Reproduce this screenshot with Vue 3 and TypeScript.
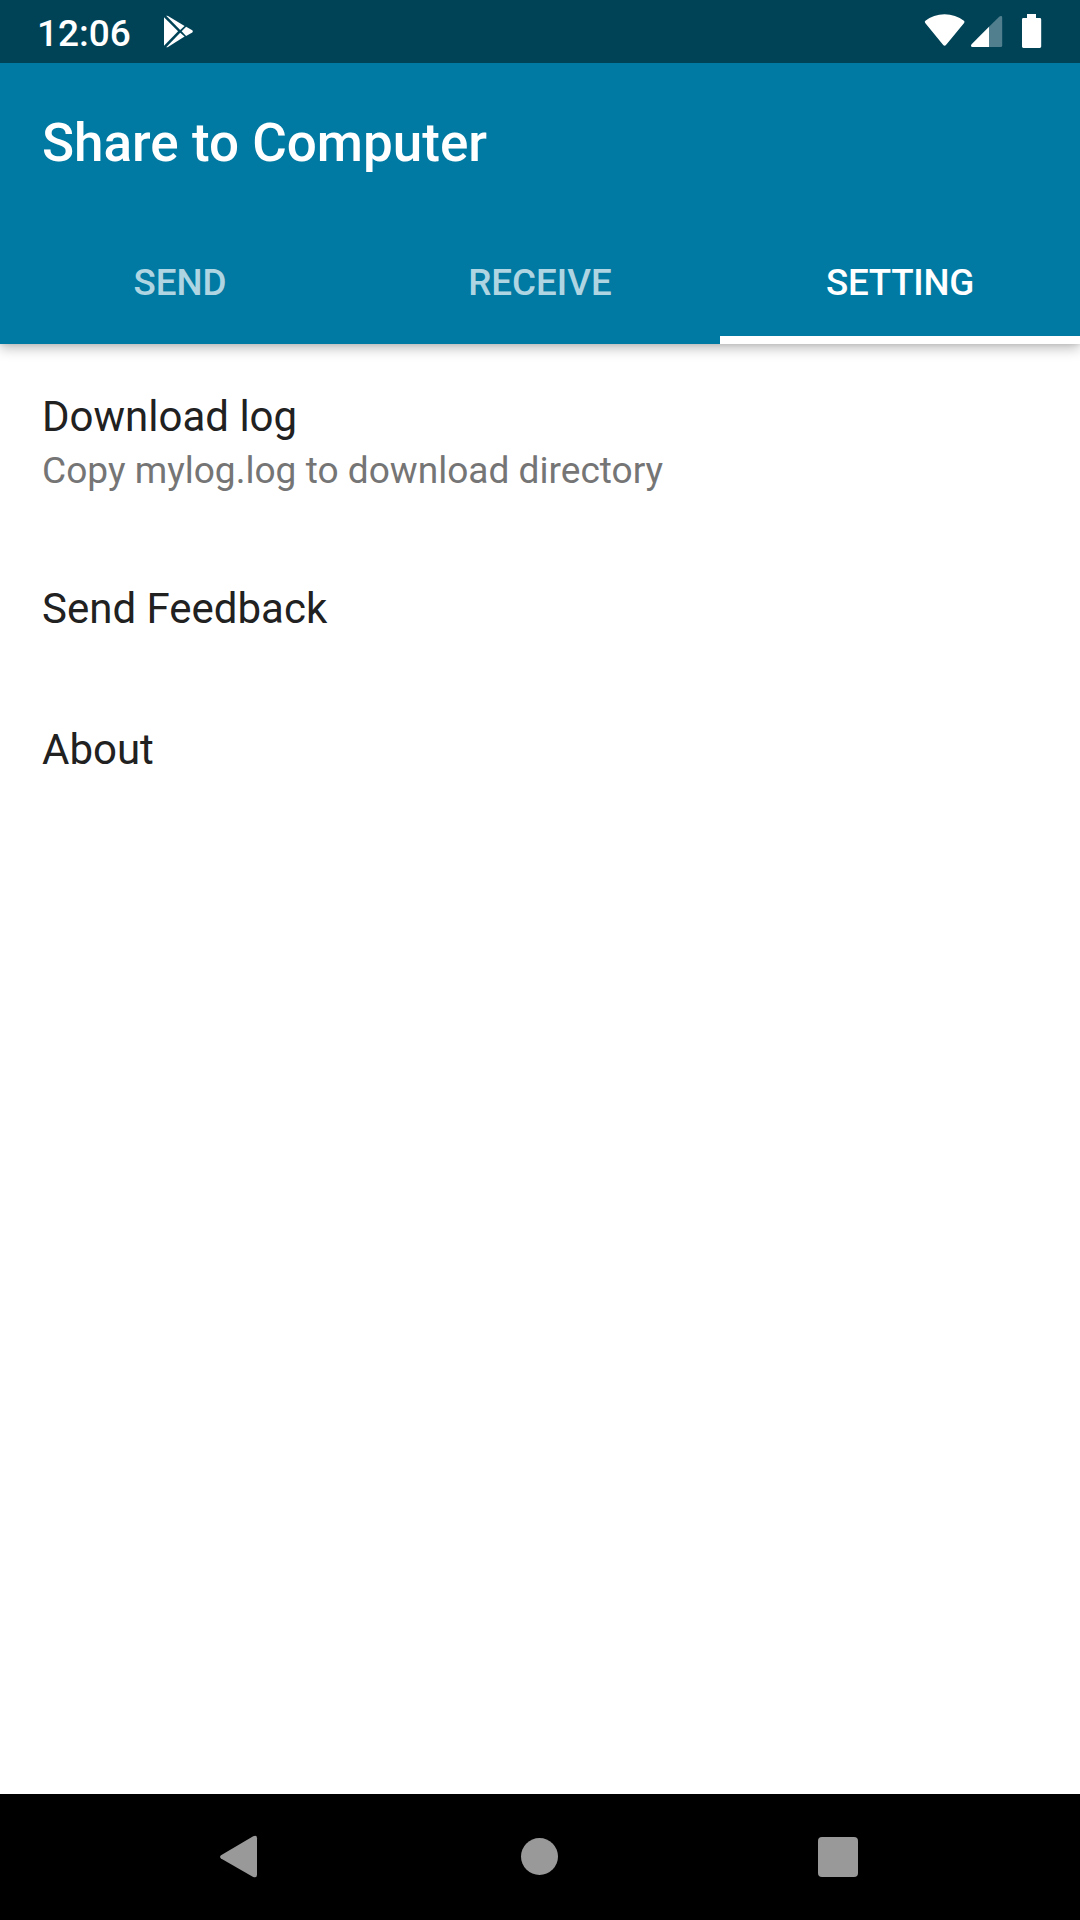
<script setup lang="ts">
import { ref } from 'vue'

interface Preference {
  title: string
  summary?: string
}

const tabs: string[] = ['SEND', 'RECEIVE', 'SETTING']
const activeTab = ref<string>('SETTING')

const preferences: Preference[] = [
  { title: 'Download log', summary: 'Copy mylog.log to download directory' },
  { title: 'Send Feedback' },
  { title: 'About' },
]
</script>

<template>
  <div class="screen">
    <header class="app-bar">
      <div class="status-bar">
        <span class="clock">12:06</span>
        <svg class="play" width="32" height="34" viewBox="0 0 32 34" fill="#fff">
          <path d="M1 2.2L15.1 16.2L1 30.8Z" />
          <path d="M3.2 .8Q4 .4 5 1L21.6 11L17.2 15Z" />
          <path d="M3.2 32.2Q4 32.6 5 32L21.6 21.6L17.2 17.7Z" />
          <path d="M23.1 11.8L29.3 15.3Q30.5 16.4 29.3 17.5L23.1 20.9L18.6 16.3Z" />
        </svg>
        <span class="spacer"></span>
        <svg class="system" width="120" height="36" viewBox="0 0 120 36" fill="#fff">
          <path d="M1.2 8.9Q.2 7.8 1.4 6.8Q9.4 .2 20.6 .2Q31.6 .2 39.9 6.8Q41.1 7.8 40.1 8.9L22 30.9Q20.6 32.5 19.2 30.9Z" />
          <path fill-opacity=".32" d="M65 12.7L75.2 2.7Q76.4 1.6 77.4 2Q78.2 2.4 78.2 3.6V31.4Q78.2 33 76.6 33H65Z" />
          <path d="M65 12.7V33H48.4Q47.2 33 47 32Q46.9 31 47.8 30Z" />
          <path d="M103 0H112V4H115.8Q117.2 4 117.2 5.4V32.6Q117.2 34 115.8 34H99.4Q98 34 98 32.6V5.4Q98 4 99.4 4H103Z" />
        </svg>
      </div>
      <h1 class="title">Share to Computer</h1>
      <nav class="tabs">
        <button
          v-for="tab in tabs"
          :key="tab"
          class="tab"
          :class="{ active: tab === activeTab }"
          @click="activeTab = tab"
        >
          {{ tab }}
        </button>
      </nav>
    </header>

    <main class="preferences">
      <section
        v-for="item in preferences"
        :key="item.title"
        class="preference"
        :class="{ detailed: item.summary }"
      >
        <div class="name">{{ item.title }}</div>
        <div v-if="item.summary" class="summary">{{ item.summary }}</div>
      </section>
    </main>

    <footer class="nav-bar">
      <svg width="40" height="44" viewBox="0 0 40 44" fill="#999">
        <path d="M1 23.4Q-.8 22 1 20.2L33.2 1.3Q37 -.4 37 3.2V39.8Q37 43.4 33.2 41.9Z" />
      </svg>
      <svg width="38" height="38" viewBox="0 0 38 38" fill="#999">
        <circle cx="19.5" cy="18.5" r="18.5" />
      </svg>
      <svg width="40" height="40" viewBox="0 0 40 40" fill="#999">
        <rect width="40" height="40" rx="4" />
      </svg>
    </footer>
  </div>
</template>

<style>
body {
  margin: 0;
}
</style>

<style scoped>
.screen {
  display: flex;
  flex-direction: column;
  width: 1080px;
  height: 1920px;
  overflow: hidden;
  background: #fff;
  font-family: Roboto, "Liberation Sans", sans-serif;
}

.app-bar {
  flex: none;
  display: flex;
  flex-direction: column;
  height: 344px;
  background: #007aa3;
  color: #fff;
  box-shadow: 0 4px 12px rgba(0, 0, 0, 0.27), 0 0 4px rgba(0, 0, 0, 0.1);
}

.status-bar {
  display: flex;
  align-items: flex-start;
  height: 63px;
  box-sizing: border-box;
  padding: 0 37px;
  background: #004357;
}

.clock {
  width: 93px;
  margin-top: 12px;
  font-size: 37px;
  font-weight: 500;
  line-height: 44px;
  white-space: nowrap;
}

.play {
  margin: 15px 0 0 33px;
}

.spacer {
  flex: 1;
}

.system {
  margin: 14px -1px 0 0;
}

.title {
  height: 147px;
  margin: 0;
  padding: 6px 42px 0;
  box-sizing: border-box;
  font-size: 53px;
  font-weight: 500;
  line-height: 148px;
}

.tabs {
  display: flex;
  flex: 1;
}

.tab {
  flex: 1;
  padding: 18px 0 0;
  border: 0;
  border-bottom: 8px solid transparent;
  background: none;
  color: rgba(255, 255, 255, 0.7);
  font: 500 36.75px/43px Roboto, "Liberation Sans", sans-serif;
}

.tab.active {
  border-bottom-color: #fff;
  color: #fff;
  letter-spacing: -0.25px;
}

.preferences {
  flex: 1;
}

.preference {
  display: flex;
  flex-direction: column;
  justify-content: center;
  height: 141px;
  box-sizing: border-box;
  padding: 0 42px;
}

.preference.detailed {
  justify-content: flex-start;
  height: 194px;
  padding-top: 48px;
}

.name {
  color: #212121;
  font-size: 42px;
  line-height: 50px;
}

.summary {
  color: #757575;
  font-size: 37.08px;
  line-height: 57px;
}

.nav-bar {
  flex: none;
  display: flex;
  align-items: center;
  justify-content: space-between;
  height: 126px;
  box-sizing: border-box;
  padding: 0 222px 0 220px;
  background: #000;
}
</style>
